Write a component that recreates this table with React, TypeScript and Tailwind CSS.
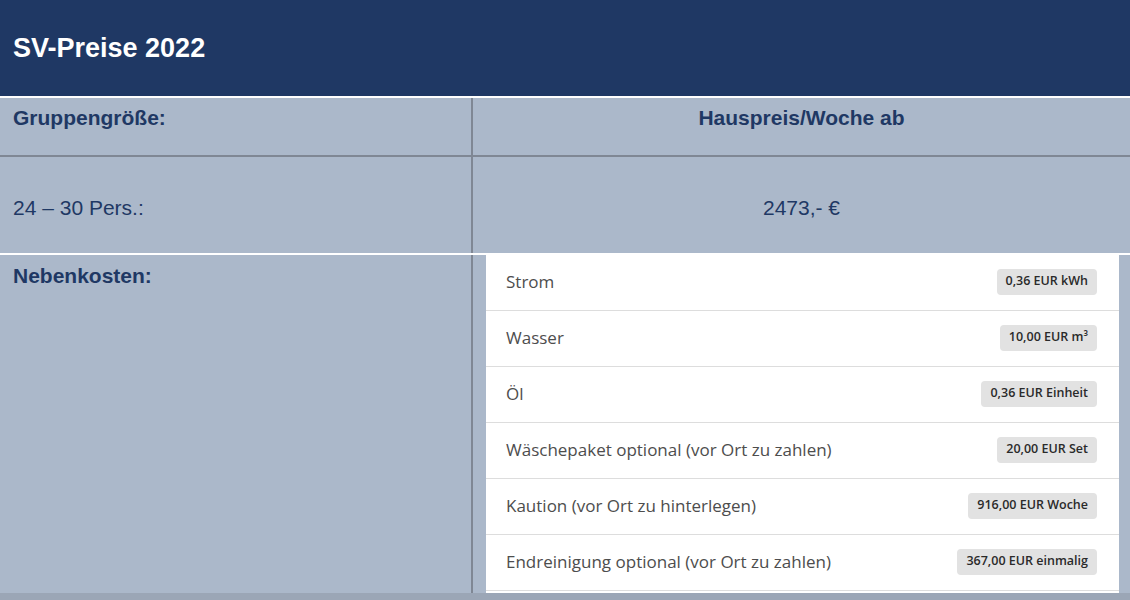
import React from 'react';

const costs = [
  { label: 'Strom', price: '0,36 EUR kWh' },
  { label: 'Wasser', price: '10,00 EUR m³' },
  { label: 'Öl', price: '0,36 EUR Einheit' },
  { label: 'Wäschepaket optional (vor Ort zu zahlen)', price: '20,00 EUR Set' },
  { label: 'Kaution (vor Ort zu hinterlegen)', price: '916,00 EUR Woche' },
  { label: 'Endreinigung optional (vor Ort zu zahlen)', price: '367,00 EUR einmalig' },
];

const App: React.FC = () => {
  return (
    <div className="w-[1130px] min-h-[600px] bg-[#abb8ca] font-['Liberation_Sans',Arial,sans-serif] text-[#1f3864]">
      {/* title bar */}
      <div className="h-[98px] bg-[#1f3864] flex items-center px-[13px] border-b-2 border-white">
        <h1 className="text-[27px] font-bold text-white leading-none">SV-Preise 2022</h1>
      </div>

      {/* head row */}
      <div className="flex h-[59px] border-b-2 border-[#7f8794]">
        <div className="w-[473px] border-r-2 border-[#7f8794] px-[13px] pt-[8px] text-[21px] font-bold leading-6">
          Gruppengröße:
        </div>
        <div className="flex-1 pt-[8px] text-center text-[21px] font-bold leading-6">Hauspreis/Woche ab</div>
      </div>

      {/* price row */}
      <div className="flex h-[98px] border-b-2 border-white">
        <div className="w-[473px] border-r-2 border-[#7f8794] px-[13px] pt-[6px] flex items-center text-[21px] leading-6">
          24 – 30 Pers.:
        </div>
        <div className="flex-1 pt-[6px] flex items-center justify-center text-[21px] leading-6">2473,- €</div>
      </div>

      {/* extra costs row */}
      <div className="flex border-b-[7px] border-[#9ba6b6]">
        <div className="w-[473px] border-r-2 border-[#7f8794] px-[13px] pt-[9px] text-[21px] font-bold leading-6">
          Nebenkosten:
        </div>
        <div className="flex-1 pl-[13px] pr-[11px]">
          <ul className="bg-white pb-[2px] font-['Open_Sans',sans-serif]">
            {costs.map((c) => (
              <li
                key={c.label}
                className="h-[56px] flex items-center justify-between pl-[20px] pr-[22px] pb-[2px] border-b border-[#dddddd]"
              >
                <span className="text-[17px] text-[#4d4d4d]">{c.label}</span>
                <span className="h-[26px] flex items-center px-[9px] rounded-[4px] bg-[#e2e2e2] text-[12.5px] font-semibold text-[#2a2a2a]">
                  {c.price}
                </span>
              </li>
            ))}
          </ul>
        </div>
      </div>
    </div>
  );
};

export default App;
